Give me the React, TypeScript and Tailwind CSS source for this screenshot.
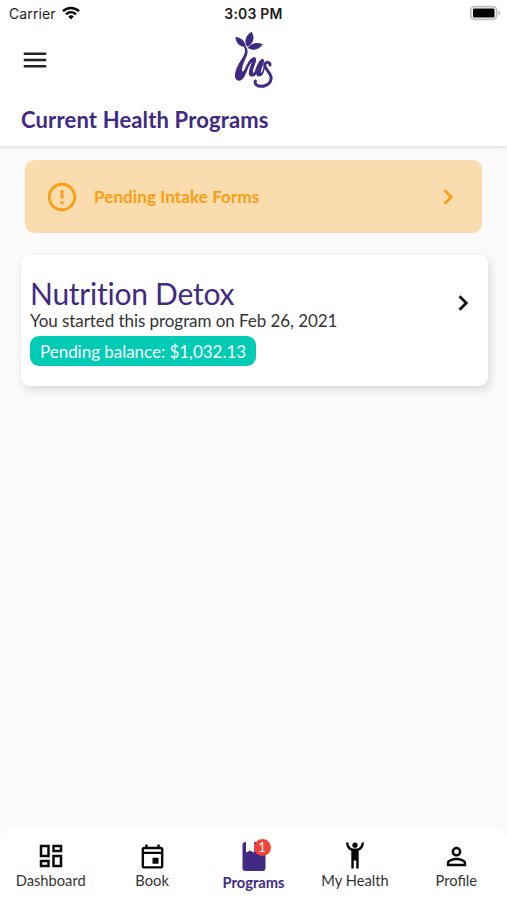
import { ReactNode } from "react";
import clsx from "clsx";

interface IconProps {
  d: string;
  className?: string;
}

function Icon({ d, className }: IconProps) {
  return (
    <svg viewBox="0 0 24 24" fill="currentColor" className={clsx("block shrink-0", className)}>
      <path d={d} />
    </svg>
  );
}

const paths = {
  menu: "M3 18h18v-2H3v2zm0-5h18v-2H3v2zm0-7v2h18V6H3z",
  chevron: "M10 6 8.59 7.41 13.17 12l-4.58 4.59L10 18l6-6z",
  error:
    "M11 15h2v2h-2v-2zm0-8h2v6h-2V7zm.99-5C6.47 2 2 6.48 2 12s4.47 10 9.99 10C17.52 22 22 17.52 22 12S17.52 2 11.99 2zM12 20c-4.42 0-8-3.58-8-8s3.58-8 8-8 8 3.58 8 8-3.58 8-8 8z",
  dashboard:
    "M19 5v2h-4V5h4M9 5v6H5V5h4m10 8v6h-4v-6h4M9 17v2H5v-2h4M21 3h-8v6h8V3zM11 3H3v10h8V3zm10 8h-8v10h8V11zm-10 4H3v6h8v-6z",
  event:
    "M17 13h-5v5h5v-5zM16 2v2H8V2H6v2H5c-1.1 0-2 .9-2 2v14c0 1.1.9 2 2 2h14c1.1 0 2-.9 2-2V6c0-1.1-.9-2-2-2h-1V2h-2zm3 18H5V10h14v10zm0-12H5V6h14v2z",
  person:
    "M12 6a2 2 0 1 1 0 4 2 2 0 0 1 0-4m0 9c2.7 0 5.8 1.29 6 2v1H6v-.99c.2-.72 3.3-2.01 6-2.01m0-11C9.79 4 8 5.79 8 8s1.79 4 4 4 4-1.79 4-4-1.79-4-4-4zm0 9c-2.67 0-8 1.34-8 4v3h16v-3c0-2.66-5.33-4-8-4z",
};

function Logo() {
  return (
    <svg viewBox="0 0 180 210" fill="#3f2a84" className="-mt-[3px] h-[70px] w-[60px]">
      {/* Leaves */}
      <path d="M34 35C51 37 63 47 66 65C48 67 36 55 34 35z" />
      <path d="M83 20C94 39 88 56 70 65C59 49 64 32 83 20z" />
      <path d="M71 68C83 53 99 51 116 58C106 75 88 79 71 68z" />
      {/* Stem */}
      <path d="M62 64C70 65 73 78 69 91C63 105 56 119 54 133C54 139 56 142 59 138C68 123 72 102 91 96C98 98 97 108 93 118C89 129 85 140 88 145C96 140 97 110 115 101C121 101 121 109 118 118C114 128 109 140 112 144C118 140 117 126 122 115L126 121C120 134 121 149 109 154C103 156 98 154 97 148C90 155 82 157 77 152C70 144 79 125 84 112C73 121 70 141 61 155C54 167 44 170 37 164C29 156 34 137 40 125C46 110 58 98 62 84C64 77 62 70 60 67z" />
      <path
        d="M138 120C138 111 127 109 123 117C118 129 137 138 141 155C144 172 129 184 112 184C99 184 91 177 94 168"
        fill="none"
        stroke="#3f2a84"
        strokeWidth="9"
        strokeLinecap="round"
      />
    </svg>
  );
}

function StatusBar() {
  return (
    <div className="grid h-7 grid-cols-[170px_167px_170px] items-center font-[Inter,sans-serif] text-[#1c1c1e]">
      <div className="-mt-px flex items-center gap-[6px] pl-[9px] text-[14px] tracking-[0.1px]">
        Carrier
        <svg viewBox="0 0 18 14" className="-mt-px h-[14px] w-[18px]" fill="none" stroke="#050505" strokeWidth="2.5">
          <path d="M1 5.1C5.5.8 12.5.8 17 5.1" />
          <path d="M4 8.3c2.9-2.7 7.1-2.7 10 0" />
          <path d="M6.2 10.4c1.6-1.6 4-1.6 5.6 0L9 13.4z" fill="#050505" stroke="none" />
        </svg>
      </div>
      <div className="-mt-[2px] whitespace-nowrap text-center text-[14px] font-semibold tracking-[0.2px]">3:03 PM</div>
      <svg viewBox="0 0 32 16" className="mr-[6px] h-4 w-8 -translate-y-px justify-self-end">
        <rect x="1.7" y="1.7" width="26" height="12.6" rx="4" fill="#fff" stroke="#bdbdbd" strokeWidth="1.8" />
        <rect x="4" y="3.5" width="21.5" height="9" rx="1.2" fill="#000" />
        <path d="M29.5 5.8c2 1 2 3.9 0 4.9z" fill="#aaa" />
      </svg>
    </div>
  );
}

interface NavItemProps {
  label: string;
  active?: boolean;
  children: ReactNode;
}

function NavItem({ label, active, children }: NavItemProps) {
  return (
    <button
      className={clsx(
        "flex flex-1 flex-col items-center whitespace-nowrap",
        active ? "font-bold text-[#3f2a84]" : "text-[#0a0a0a]"
      )}
    >
      <div className={clsx("flex items-center justify-center", active ? "h-[45px] pt-3" : "h-[43px] pt-[13px]")}>
        {children}
      </div>
      <span className={clsx("text-[14.7px] leading-[18px]", !active && "text-[#333]")}>{label}</span>
    </button>
  );
}

export default function App() {
  return (
    <div className="flex h-[900px] w-[507px] flex-col overflow-hidden bg-[#fafafa] font-[Lato,sans-serif]">
      <header className="relative h-[146px] shrink-0 bg-white shadow-[0_1px_4px_rgba(0,0,0,0.15)]">
        <StatusBar />
        <div className="grid h-[67px] grid-cols-3 items-center">
          <Icon d={paths.menu} className="mb-[4px] ml-5 size-[30px] text-[#222]" />
          <div className="flex justify-center">
            <Logo />
          </div>
        </div>
        <h1 className="pl-[21px] pt-[11px] text-[22px] font-bold leading-7 tracking-[0.15px] text-[#3f2a84]">
          Current Health Programs
        </h1>
      </header>

      <main className="flex-1">
        {/* Intake notice */}
        <div className="ml-[25px] mt-[14px] flex h-[73px] w-[457px] items-center rounded-[9px] bg-[#fbdcae] pl-[20px] pr-[19px] text-[#fa9f12]">
          <Icon d={paths.error} className="size-[34px]" />
          <span className="ml-[15px] flex-1 text-[17px] font-bold tracking-[0.1px]">Pending Intake Forms</span>
          <Icon d={paths.chevron} className="size-[30px] stroke-current stroke-[0.3]" />
        </div>

        {/* Program card */}
        <div className="ml-[21px] mt-[22px] flex h-[131px] w-[467px] rounded-[9px] bg-white pl-[9px] pr-[10px] shadow-[2px_4px_10px_rgba(0,0,0,0.13)]">
          <div className="flex-1 pt-5">
            <h2 className="text-[30px] leading-9 tracking-[-0.25px] text-[#3f2a84] [font-variant-ligatures:none]">
              Nutrition Detox
            </h2>
            <p className="text-[17px] leading-5 tracking-[-0.06px] text-[#333]">You started this program on Feb 26, 2021</p>
            <span className="mt-[5px] inline-flex h-[30px] items-center rounded-[9px] bg-[#00cbb5] px-[10px] pt-px text-[17px] tracking-[-0.03px] text-white">
              Pending balance: $1,032.13
            </span>
          </div>
          <Icon d={paths.chevron} className="mt-[33px] size-[30px] stroke-current stroke-[0.3] text-[#111]" />
        </div>
      </main>

      <nav className="flex h-[72px] shrink-0 rounded-t-[10px] bg-white shadow-[0_0_3px_rgba(0,0,0,0.02)]">
        <NavItem label="Dashboard">
          <Icon d={paths.dashboard} className="size-[30px]" />
        </NavItem>
        <NavItem label="Book">
          <Icon d={paths.event} className="size-[29px]" />
        </NavItem>
        <NavItem label="Programs" active>
          <div className="relative">
            <svg viewBox="0 0 24 29" className="h-[29px] w-6" fill="currentColor">
              <path d="M3.5 0H4v10.5l1.7-.7L8 8.6l2.5 1.2 1.7.7V0h8.3C22.5 0 23.5 1 23.5 3v23c0 2-1 3-3 3h-17c-2 0-3-1-3-3V3c0-2 1-3 3-3z" />
            </svg>
            <span className="absolute -top-[3px] left-[12px] flex size-[17px] items-center justify-center rounded-full bg-[#f44336] text-[13px] font-normal leading-none text-white">
              1
            </span>
          </div>
        </NavItem>
        <NavItem label="My Health">
          <svg viewBox="0 0 18 27" className="-mt-[2px] h-[27px] w-[18px]" fill="currentColor">
            <circle cx="9" cy="3.2" r="2.6" />
            <path d="M0 .5h2.3C2.7 4 4.5 6.2 7 6.6h4c2.5-.4 4.3-2.6 4.7-6.1H18c-.3 4.5-2 7.2-5.3 8.3V26.5h-2.5v-8H7.8v8H5.3V8.8C2 7.7.3 5 0 .5z" />
          </svg>
        </NavItem>
        <NavItem label="Profile">
          <Icon d={paths.person} className="size-[29px]" />
        </NavItem>
      </nav>
    </div>
  );
}
